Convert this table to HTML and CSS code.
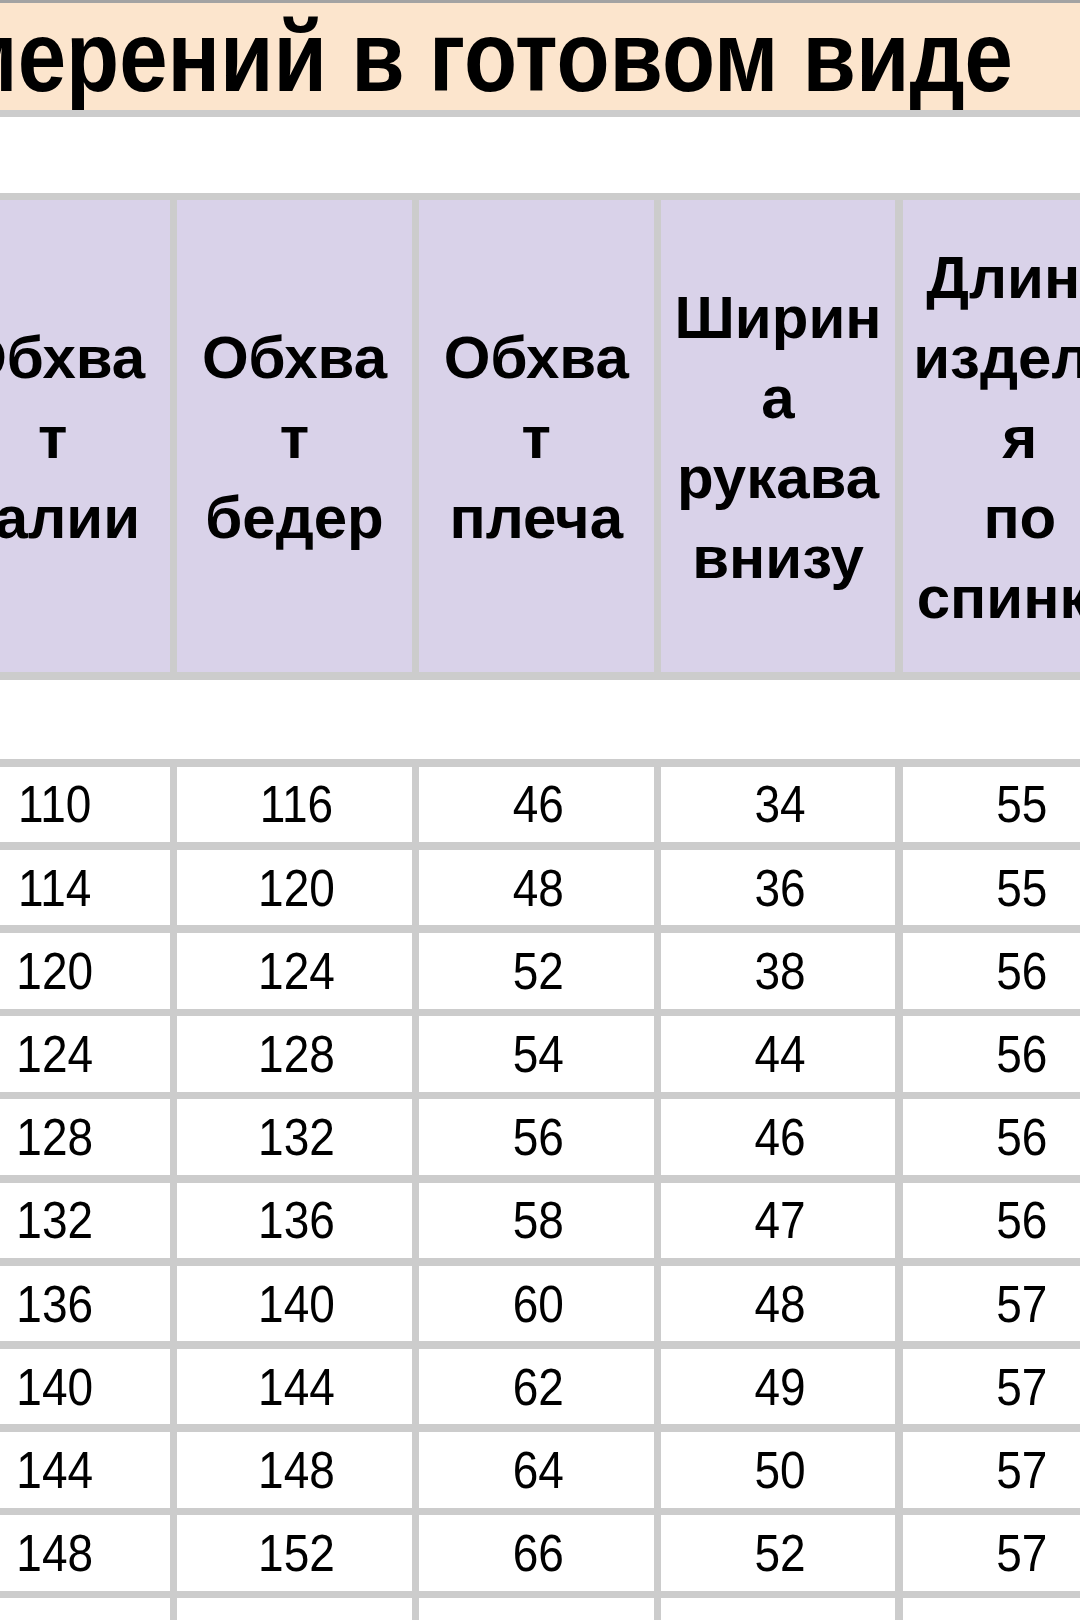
FILE: index.html
```html
<!DOCTYPE html>
<html lang="ru">
<head>
<meta charset="utf-8">
<title>Таблица измерений в готовом виде</title>
<link rel="stylesheet" href="styles.css">
</head>
<body>
<div class="page">
  <div class="topline"></div>
  <div class="title"><span class="title-text">Таблица измерений в готовом виде</span></div>
  <div class="sep"></div>
  <div class="blank"></div>
  <div class="sheet">
    <div class="hcell"><span>Обхва<br>т<br>талии</span></div>
    <div class="hcell"><span>Обхва<br>т<br>бедер</span></div>
    <div class="hcell"><span>Обхва<br>т<br>плеча</span></div>
    <div class="hcell"><span>Ширин<br>а<br>рукава<br>внизу</span></div>
    <div class="hcell"><span>Длина<br>издели<br>я<br>по<br>спинке</span></div>
    <div class="spacer"></div>

    <div class="cell"><span>110</span></div><div class="cell"><span>116</span></div><div class="cell"><span>46</span></div><div class="cell"><span>34</span></div><div class="cell"><span>55</span></div>
    <div class="cell"><span>114</span></div><div class="cell"><span>120</span></div><div class="cell"><span>48</span></div><div class="cell"><span>36</span></div><div class="cell"><span>55</span></div>
    <div class="cell"><span>120</span></div><div class="cell"><span>124</span></div><div class="cell"><span>52</span></div><div class="cell"><span>38</span></div><div class="cell"><span>56</span></div>
    <div class="cell"><span>124</span></div><div class="cell"><span>128</span></div><div class="cell"><span>54</span></div><div class="cell"><span>44</span></div><div class="cell"><span>56</span></div>
    <div class="cell"><span>128</span></div><div class="cell"><span>132</span></div><div class="cell"><span>56</span></div><div class="cell"><span>46</span></div><div class="cell"><span>56</span></div>
    <div class="cell"><span>132</span></div><div class="cell"><span>136</span></div><div class="cell"><span>58</span></div><div class="cell"><span>47</span></div><div class="cell"><span>56</span></div>
    <div class="cell"><span>136</span></div><div class="cell"><span>140</span></div><div class="cell"><span>60</span></div><div class="cell"><span>48</span></div><div class="cell"><span>57</span></div>
    <div class="cell"><span>140</span></div><div class="cell"><span>144</span></div><div class="cell"><span>62</span></div><div class="cell"><span>49</span></div><div class="cell"><span>57</span></div>
    <div class="cell"><span>144</span></div><div class="cell"><span>148</span></div><div class="cell"><span>64</span></div><div class="cell"><span>50</span></div><div class="cell"><span>57</span></div>
    <div class="cell"><span>148</span></div><div class="cell"><span>152</span></div><div class="cell"><span>66</span></div><div class="cell"><span>52</span></div><div class="cell"><span>57</span></div>
    <div class="cell"></div><div class="cell"></div><div class="cell"></div><div class="cell"></div><div class="cell"></div>
  </div>
</div>
</body>
</html>
```

FILE: styles.css
```css
html, body {
  margin: 0;
  padding: 0;
  background: #ffffff;
}

.page {
  width: 1080px;
  height: 1620px;
  overflow: hidden;
  position: relative;
  background: #ffffff;
  font-family: "Liberation Sans", Arial, sans-serif;
  color: #000000;
}

.topline {
  height: 3px;
  background: #a3a3a3;
}

.title {
  height: 107px;
  background: #fce5cd;
  display: flex;
  justify-content: flex-end;
  align-items: flex-start;
  padding-top: 14px;
  padding-right: 67px;
  box-sizing: border-box;
  white-space: nowrap;
  overflow: hidden;
}

.title-text {
  display: inline-block;
  font-weight: bold;
  font-size: 87px;
  line-height: 87px;
  transform-origin: 50% 75px;
  transform: scaleY(1.16);
}

.sep {
  height: 7px;
  background: #cccccc;
}

.blank {
  height: 76px;
  background: #ffffff;
}

.sheet {
  display: grid;
  grid-template-columns: repeat(5, 234.6px);
  grid-template-rows: 472px 79.4px repeat(11, 75.6px);
  column-gap: 7.2px;
  row-gap: 7.6px;
  padding-top: 7px;
  margin-left: -64.6px;
  width: 1300px;
  background: #cccccc;
}

.hcell {
  background: #d9d2e9;
  display: flex;
  align-items: center;
  justify-content: center;
  text-align: center;
  font-weight: bold;
  font-size: 60px;
  line-height: 80px;
  padding-top: 4px;
  box-sizing: border-box;
  white-space: nowrap;
  overflow: hidden;
}

.spacer {
  grid-column: 1 / -1;
  background: #ffffff;
  margin-right: -100px;
}

.cell {
  background: #ffffff;
  display: flex;
  align-items: center;
  justify-content: center;
  font-size: 46px;
  line-height: 46px;
}

.cell span {
  display: inline-block;
  transform: scaleY(1.12);
  padding-left: 4px;
}
```
